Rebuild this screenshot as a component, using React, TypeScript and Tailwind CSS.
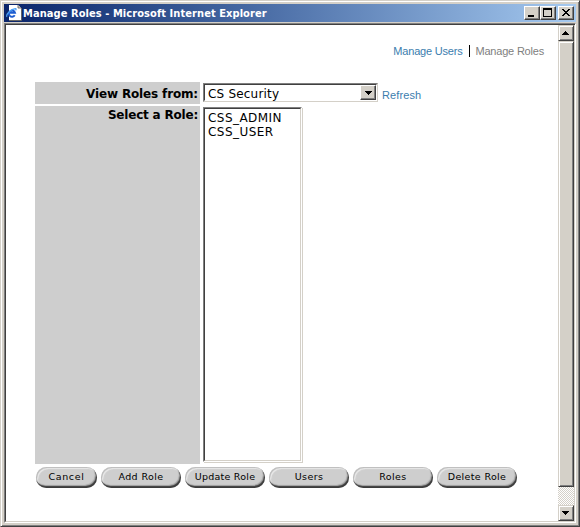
import React from "react";

const raised =
  "border border-t-white border-l-white border-r-[#404040] border-b-[#404040] bg-[#d4d0c8] shadow-[inset_-1px_-1px_0_#808080]";

function WindowButton({ children }: { children: React.ReactNode }) {
  return (
    <button className={`h-[14px] w-4 shrink-0 ${raised}`}>
      <svg className="-ml-px -mt-px block h-[14px] w-4" viewBox="0 0 16 14" shapeRendering="crispEdges">
        {children}
      </svg>
    </button>
  );
}

function ScrollButton({ up = false }: { up?: boolean }) {
  return (
    <button className="h-4 w-4 shrink-0 border border-t-[#d4d0c8] border-l-[#d4d0c8] border-r-[#404040] border-b-[#404040] bg-[#d4d0c8] shadow-[inset_1px_1px_0_#fff,inset_-1px_-1px_0_#808080]">
      <svg className="-ml-px -mt-px block h-4 w-4" viewBox="0 0 16 16" shapeRendering="crispEdges">
        {up ? (
          <path d="M7 6h1v1h1v1h1v1h1v1H4V9h1V8h1V7h1z" />
        ) : (
          <path d="M4 6h7v1h-1v1H9v1H8v1H7V9H6V8H5V7H4z" />
        )}
      </svg>
    </button>
  );
}

function PillButton({ label, narrow = false, tracking }: { label: string; narrow?: boolean; tracking: string }) {
  return (
    <button
      className={`flex h-[21px] shrink-0 items-center justify-center whitespace-nowrap rounded-full bg-[#cecece] pb-0.5 font-['DejaVu_Sans',sans-serif] text-[9.5px] leading-none text-black shadow-[inset_-1px_-2px_1px_#3c3c3c,inset_-2px_-3px_1px_#aaa,inset_1px_1px_1px_#bbb,inset_2px_2px_1px_#eee] ${narrow ? "w-[61px]" : "w-20"} ${tracking}`}
    >
      {label}
    </button>
  );
}

function PageIcon() {
  return (
    <svg className="h-4 w-4 shrink-0" viewBox="0 0 16 16">
      <path d="M3 0h9l3 3v13H3z" fill="#fff" />
      <path d="M12 0v3h3" fill="#d4d0c8" stroke="#555" strokeWidth=".8" />
      <path d="M15.5 3v12.5H3" fill="none" stroke="#666" />
      <path d="M8.7 10.2A3.1 3.1 0 1 1 9 7.7H4" fill="none" stroke="#1c5cd0" strokeWidth="1.9" />
      <path d="M1 11.8C-.5 9.5 5 4 9.3 3.6c1.2-.1.9.9.3 1.7" fill="none" stroke="#4ba0f5" strokeWidth="1.2" />
    </svg>
  );
}

export default function App() {
  return (
    <div className="flex h-[527px] w-[580px] flex-col border border-t-[#d4d0c8] border-l-[#d4d0c8] border-r-[#404040] border-b-[#404040] bg-[#d4d0c8] p-[3px] font-['DejaVu_Sans',sans-serif] text-black shadow-[inset_1px_1px_0_#fff,inset_-1px_-1px_0_#808080]">
      <header className="flex h-[18px] shrink-0 items-center bg-linear-to-r from-[#0a246a] to-[#a6caf0] pl-0.5 pr-0.5">
        <PageIcon />
        <h1 className="ml-px flex-1 whitespace-nowrap font-['DejaVu_Sans_Condensed','DejaVu_Sans',sans-serif] text-[11px] font-bold leading-none tracking-[0.07px] text-white">
          Manage Roles - Microsoft Internet Explorer
        </h1>
        <div className="flex">
          <WindowButton><path d="M4 9h6v2H4z" /></WindowButton>
          <WindowButton><path fillRule="evenodd" d="M3 2h9v9H3zM4 4v6h7V4z" /></WindowButton>
          <div className="ml-0.5 flex">
            <WindowButton>
              <path d="M4 3h2v1h1v1h2V4h1V3h2v1h-1v1h-1v1H9v1h1v1h1v1h1v1h-2V9H9V8H7v1H6v1H4V9h1V8h1V7h1V6H6V5H5V4H4z" />
            </WindowButton>
          </div>
        </div>
      </header>

      <div className="mt-px flex min-h-0 flex-1 border border-t-[#808080] border-l-[#808080] border-r-white border-b-white bg-white">
        <div className="flex min-w-0 flex-1 border border-r-0 border-t-[#404040] border-l-[#404040] border-b-[#d4d0c8]">
          <main className="flex min-w-0 flex-1 flex-col pl-[29px]">
            <nav className="mt-[18px] flex h-4 items-center justify-end pr-[14px] font-['Liberation_Sans',sans-serif] text-[11px] leading-none tracking-[-0.2px]">
              <a className="text-[#3b7dae]">Manage Users</a>
              <span className="ml-[7px] mr-[5px] h-3 w-px bg-black" />
              <span className="text-[#808080]">Manage Roles</span>
            </nav>

            <section className="mt-[23px] flex h-[22px] shrink-0">
              <div className="flex w-[165px] items-center justify-end bg-[#cecece] pr-0.5 pt-0.5 text-[12px] font-bold leading-none tracking-[-0.15px]">
                View Roles from:
              </div>
              <div className="ml-[3px] mt-px flex h-[19px] w-[175px] border border-t-[#808080] border-l-[#808080] border-r-[#d4d0c8] border-b-[#d4d0c8]">
                <div className="flex flex-1 border border-t-[#404040] border-l-[#404040] border-r-white border-b-white">
                  <span className="flex-1 pl-[3px] pt-[2px] text-[12px] leading-[14px] tracking-[0.2px]">CS Security</span>
                  <button className={`flex w-4 items-center justify-center ${raised}`}>
                    <svg className="h-1 w-[7px]" viewBox="0 0 7 4" shapeRendering="crispEdges">
                      <path d="M0 0h7v1H6v1H5v1H4v1H3V3H2V2H1V1H0z" />
                    </svg>
                  </button>
                </div>
              </div>
              <a className="ml-1 mt-[7px] font-['Liberation_Sans',sans-serif] text-[11px] leading-[13px] tracking-[0.1px] text-[#3b7dae]">Refresh</a>
            </section>

            <section className="mt-0.5 flex h-[358px] shrink-0">
              <div className="w-[165px] bg-[#cecece] pr-0.5 pt-[3px] text-right text-[12px] font-bold leading-[13px] tracking-[-0.2px]">
                Select a Role:
              </div>
              <div className="ml-[3px] mt-px flex h-[355px] w-[99px] border border-t-[#808080] border-l-[#808080] border-r-white border-b-white shadow-[1px_1px_0_#d4d0c8]">
                <ul className="flex-1 border border-t-[#404040] border-l-[#404040] border-r-[#d4d0c8] border-b-[#d4d0c8] pl-[3px] pt-0.5 text-[12px] leading-[14px] tracking-[0.45px]">
                  <li>CSS_ADMIN</li>
                  <li>CSS_USER</li>
                </ul>
              </div>
            </section>

            <footer className="ml-px mt-[3px] flex gap-1">
              <PillButton label="Cancel" narrow tracking="tracking-[0.6px]" />
              <PillButton label="Add Role" tracking="tracking-[0.4px]" />
              <PillButton label="Update Role" tracking="tracking-[0.25px]" />
              <PillButton label="Users" tracking="tracking-[0.4px]" />
              <PillButton label="Roles" tracking="tracking-[0.4px]" />
              <PillButton label="Delete Role" tracking="tracking-[0.35px]" />
            </footer>
          </main>

          <aside className="flex w-4 shrink-0 flex-col bg-[conic-gradient(#d4d0c8_25%,#fff_0_50%,#d4d0c8_0_75%,#fff_0)] bg-size-[2px_2px]">
            <ScrollButton up />
            <div className="h-[446px] shrink-0 border border-t-[#d4d0c8] border-l-[#d4d0c8] border-r-[#404040] border-b-[#404040] bg-[#d4d0c8] shadow-[inset_1px_1px_0_#fff,inset_-1px_-1px_0_#808080]" />
            <div className="flex-1" />
            <ScrollButton />
          </aside>
          <div className="w-px shrink-0 bg-[#d4d0c8]" />
        </div>
      </div>
    </div>
  );
}
